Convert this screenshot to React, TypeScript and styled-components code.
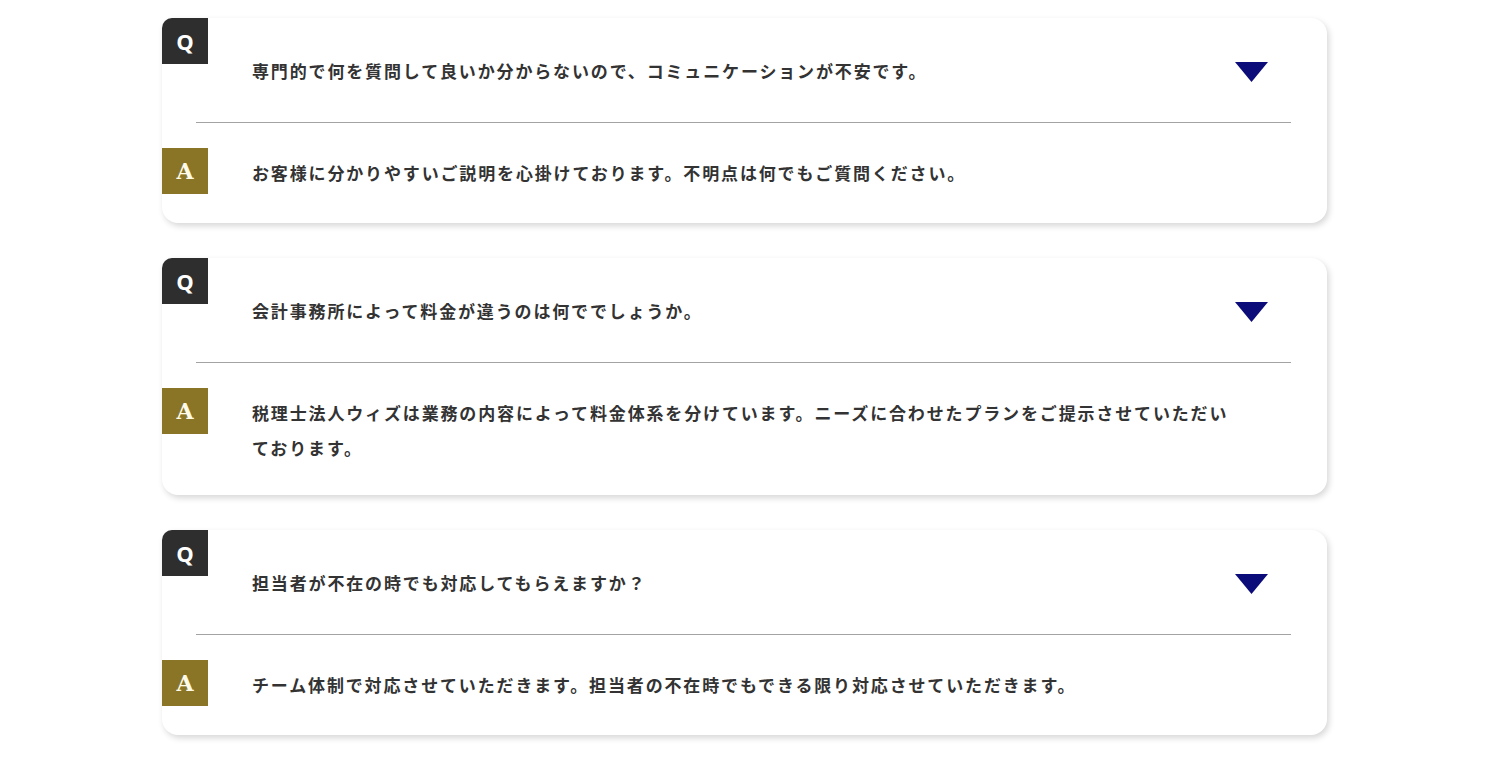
import styled, { createGlobalStyle } from "styled-components";

const GlobalStyle = createGlobalStyle`
  html, body {
    margin: 0;
    padding: 0;
    background: #fff;
  }
  body {
    font-family: "Noto Sans CJK JP", "Noto Sans", sans-serif;
    color: #333;
  }
`;

const Page = styled.div`
  width: 1500px;
  padding: 18px 0 20px 162px;
  box-sizing: border-box;
  display: flex;
  flex-direction: column;
  gap: 35px;
`;

const Card = styled.div`
  width: 1165px;
  background: #fff;
  border-radius: 10px 16px 16px 16px;
  box-shadow: 2px 3px 6px rgba(0, 0, 0, 0.16);
`;

const QRow = styled.div`
  height: 104px;
  display: flex;
  align-items: flex-start;
`;

const Badge = styled.div<{ $kind: "q" | "a" }>`
  flex: 0 0 auto;
  width: 46px;
  height: 46px;
  display: flex;
  align-items: center;
  justify-content: center;
  color: ${(p) => (p.$kind === "q" ? "#fff" : "#fffbe8")};
  background: ${(p) => (p.$kind === "q" ? "#2e2e2e" : "#8a7526")};
  border-radius: ${(p) => (p.$kind === "q" ? "10px 0 0 0" : "0")};
  font-family: ${(p) =>
    p.$kind === "q"
      ? `"Open Sans", "Liberation Sans", sans-serif`
      : `"DejaVu Serif", "Liberation Serif", serif`};
  font-weight: 700;
  font-size: ${(p) => (p.$kind === "q" ? "22px" : "22px")};
  line-height: 1;
`;

const Text = styled.p`
  margin: 0 0 0 44px;
  font-size: 17px;
  font-weight: 700;
  letter-spacing: 1.85px;
  line-height: 35px;
  color: #333;
`;

const QText = styled(Text)`
  padding-top: 35px;
`;

const AText = styled(Text)`
  margin-top: 7px;
  margin-bottom: 1px;
  margin-right: 90px;
`;

const Arrow = styled.svg`
  flex: 0 0 auto;
  margin: 44px 59px 0 auto;
`;

const Divider = styled.div`
  height: 1px;
  margin: 0 36px 0 34px;
  background: #a3a3a3;
`;

const ARow = styled.div`
  display: flex;
  align-items: flex-start;
  padding: 25px 0 29px;
`;

const faqs = [
  {
    q: "専門的で何を質問して良いか分からないので、コミュニケーションが不安です。",
    a: "お客様に分かりやすいご説明を心掛けております。不明点は何でもご質問ください。",
  },
  {
    q: "会計事務所によって料金が違うのは何ででしょうか。",
    a: "税理士法人ウィズは業務の内容によって料金体系を分けています。ニーズに合わせたプランをご提示させていただいております。",
  },
  {
    q: "担当者が不在の時でも対応してもらえますか？",
    a: "チーム体制で対応させていただきます。担当者の不在時でもできる限り対応させていただきます。",
  },
];

const App = (): JSX.Element => {
  return (
    <>
      <GlobalStyle />
      <Page>
        {faqs.map((item) => (
          <Card key={item.q}>
            <QRow>
              <Badge $kind="q">Q</Badge>
              <QText>{item.q}</QText>
              <Arrow width="33" height="20" viewBox="0 0 33 20">
                <polygon points="0,0 33,0 16.5,20" fill="#0b0b7a" />
              </Arrow>
            </QRow>
            <Divider />
            <ARow>
              <Badge $kind="a">A</Badge>
              <AText>{item.a}</AText>
            </ARow>
          </Card>
        ))}
      </Page>
    </>
  );
};

export default App;
